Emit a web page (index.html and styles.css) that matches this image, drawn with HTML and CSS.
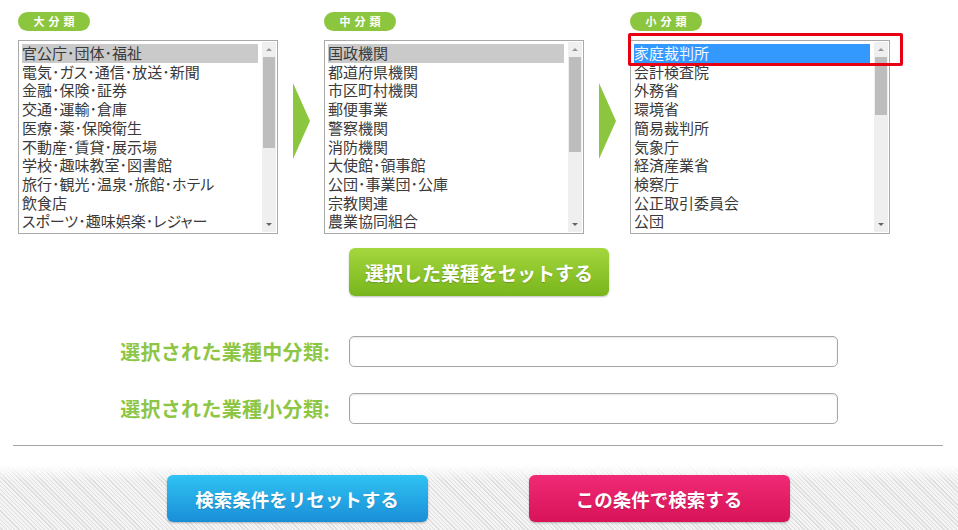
FILE: index.html
```html
<!DOCTYPE html>
<html lang="ja">
<head>
    <meta charset="UTF-8">
    <title>業種選択</title>
    <link rel="stylesheet" href="styles.css">
</head>
<body>
    <div class="picker">
        <div class="col">
            <span class="pill">大分類</span>
            <div class="listbox">
                <ul class="items">
                    <li class="on">官公庁･団体･福祉</li>
                    <li>電気･ガス･通信･放送･新聞</li>
                    <li>金融･保険･証券</li>
                    <li>交通･運輸･倉庫</li>
                    <li>医療･薬･保険衛生</li>
                    <li>不動産･賃貸･展示場</li>
                    <li>学校･趣味教室･図書館</li>
                    <li>旅行･観光･温泉･旅館･ホテル</li>
                    <li>飲食店</li>
                    <li>スポーツ･趣味娯楽･レジャー</li>
                    <li>自動車･オートバイ･自転車･ガソリン</li>
                </ul>
                <div class="scrollbar">
                    <span class="up"></span>
                    <span class="track"><span class="thumb thumb-a"></span></span>
                    <span class="down"></span>
                </div>
            </div>
        </div>

        <div class="arrow"></div>

        <div class="col">
            <span class="pill">中分類</span>
            <div class="listbox">
                <ul class="items">
                    <li class="on">国政機関</li>
                    <li>都道府県機関</li>
                    <li>市区町村機関</li>
                    <li>郵便事業</li>
                    <li>警察機関</li>
                    <li>消防機関</li>
                    <li>大使館･領事館</li>
                    <li>公団･事業団･公庫</li>
                    <li>宗教関連</li>
                    <li>農業協同組合</li>
                    <li>生活協同組合</li>
                </ul>
                <div class="scrollbar">
                    <span class="up"></span>
                    <span class="track"><span class="thumb thumb-b"></span></span>
                    <span class="down"></span>
                </div>
            </div>
        </div>

        <div class="arrow"></div>

        <div class="col">
            <span class="pill">小分類</span>
            <div class="listbox">
                <ul class="items">
                    <li class="sel">家庭裁判所</li>
                    <li>会計検査院</li>
                    <li>外務省</li>
                    <li>環境省</li>
                    <li>簡易裁判所</li>
                    <li>気象庁</li>
                    <li>経済産業省</li>
                    <li>検察庁</li>
                    <li>公正取引委員会</li>
                    <li>公団</li>
                    <li>厚生労働省</li>
                </ul>
                <div class="scrollbar">
                    <span class="up"></span>
                    <span class="track"><span class="thumb thumb-c"></span></span>
                    <span class="down"></span>
                </div>
            </div>
            <div class="focus-ring"></div>
        </div>
    </div>

    <button class="set-btn">選択した業種をセットする</button>

    <div class="fields">
        <label for="midType">選択された業種中分類:</label>
        <input type="text" id="midType">
        <label for="smallType">選択された業種小分類:</label>
        <input type="text" id="smallType">
    </div>

    <hr class="divider">

    <div class="footer">
        <button class="btn btn-reset">検索条件をリセットする</button>
        <button class="btn btn-search">この条件で検索する</button>
    </div>
</body>
</html>
```

FILE: styles.css
```css
body {
    margin: 0;
    font-family: "Noto Sans CJK JP", sans-serif;
    color: #333;
    background: #fff;
}
.picker {
    display: flex;
    align-items: flex-start;
    padding: 12px 0 0 18px;
}
.col {
    position: relative;
    width: 260px;
}
.pill {
    display: block;
    width: 72px;
    height: 19px;
    margin-bottom: 9px;
    border-radius: 10px;
    background: #8cc63f;
    color: #fff;
    font-size: 11px;
    font-weight: bold;
    line-height: 19px;
    letter-spacing: 4px;
    text-indent: 4px;
    text-align: center;
}
.listbox {
    display: flex;
    height: 194px;
    box-sizing: border-box;
    border: 1px solid #a9a9a9;
    overflow: hidden;
    background: #fff;
}
.items {
    flex: 1;
    margin: 0;
    padding: 3px 4px 0 3px;
    list-style: none;
    font-size: 15px;
    line-height: 18.7px;
    font-feature-settings: "palt";
    color: #3a3a3a;
    white-space: nowrap;
    overflow: hidden;
}
.items li.on {
    background: #cacaca;
}
.items li.sel {
    background: #3399ff;
    color: #f2f6ff;
}
.scrollbar {
    display: flex;
    flex-direction: column;
    width: 14px;
    margin: 1px 1px 1px 0;
    background: #efefef;
}
.up,
.down {
    display: flex;
    align-items: center;
    justify-content: center;
    height: 15px;
}
.up::before {
    content: "";
    border: 3px solid transparent;
    border-bottom: 3px solid #999;
    border-top: 0;
}
.down::before {
    content: "";
    border: 3px solid transparent;
    border-top: 3px solid #666;
    border-bottom: 0;
}
.track {
    flex: 1;
}
.thumb {
    display: block;
    margin: 0 1px;
    background: #bdbdbd;
}
.thumb-a { height: 91px; }
.thumb-b { height: 95px; }
.thumb-c { height: 58px; }
.arrow {
    width: 0;
    height: 0;
    margin: 71px 14.5px 0;
    border-left: 17px solid #8cc63f;
    border-top: 38px solid transparent;
    border-bottom: 38px solid transparent;
}
.focus-ring {
    position: absolute;
    left: -2px;
    top: 21px;
    width: 275px;
    height: 33px;
    box-sizing: border-box;
    border: 3px solid #e60012;
    border-radius: 2px;
}
.set-btn {
    display: block;
    width: 260px;
    height: 48px;
    margin: 14px auto 0;
    border: 0;
    border-radius: 6px;
    background: linear-gradient(#a4d73d, #78b51c);
    box-shadow: 0 1px 2px rgba(0, 0, 0, 0.25);
    color: #fff;
    font-family: "Noto Sans CJK JP", sans-serif;
    font-size: 19px;
    font-weight: bold;
    text-shadow: 0 1px 1px rgba(0, 0, 0, 0.2);
}
.fields {
    display: grid;
    grid-template-columns: 330px 489px;
    column-gap: 19px;
    row-gap: 26px;
    align-items: center;
    margin-top: 40px;
}
.fields label {
    text-align: right;
    color: #8dc644;
    font-size: 20px;
    font-weight: bold;
    letter-spacing: 0.3px;
}
.fields input {
    height: 31px;
    box-sizing: border-box;
    border: 1px solid #a6a6a6;
    border-radius: 5px;
    box-shadow: inset 0 1px 2px rgba(0, 0, 0, 0.1);
}
.divider {
    margin: 21px 15px 0 13px;
    border: 0;
    border-top: 1px solid #a6a6a6;
}
.footer {
    display: flex;
    justify-content: center;
    gap: 101px;
    margin-top: 19px;
    padding: 10px 2px 9px 0;
    background:
        linear-gradient(#fff, rgba(255, 255, 255, 0) 16px),
        repeating-linear-gradient(45deg, #f4f4f4 0 2px, #dedede 2px 3px);
}
.btn {
    width: 261px;
    height: 47px;
    border: 0;
    border-radius: 6px;
    box-shadow: 0 1px 2px rgba(0, 0, 0, 0.25);
    color: #fff;
    font-family: "Noto Sans CJK JP", sans-serif;
    font-size: 18.5px;
    font-weight: bold;
    text-shadow: 0 1px 1px rgba(0, 0, 0, 0.15);
}
.btn-reset {
    background: linear-gradient(#2fc3f2, #1a8ed8);
}
.btn-search {
    background: linear-gradient(#f02a75, #d81358);
}
```
